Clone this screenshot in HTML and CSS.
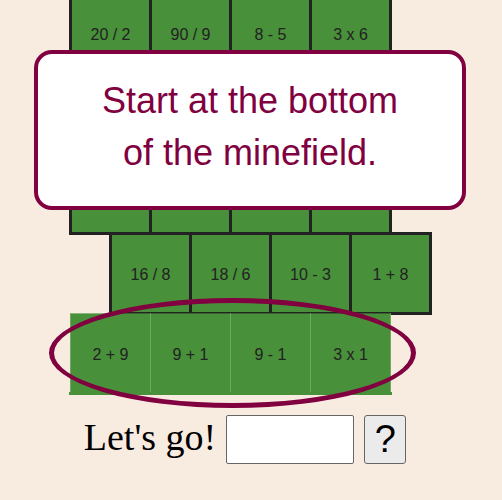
FILE: index.html
```html
<!DOCTYPE html>
<html lang="en">
<head>
<meta charset="utf-8">
<title>Minefield</title>
<link rel="stylesheet" href="styles.css">
</head>
<body>
<main class="game">
  <div class="board">
    <div class="row"><div class="cell">20 / 2</div><div class="cell">90 / 9</div><div class="cell">8 - 5</div><div class="cell">3 x 6</div></div>
    <div class="row shifted"><div class="cell"></div><div class="cell"></div><div class="cell"></div><div class="cell"></div></div>
    <div class="row"><div class="cell"></div><div class="cell"></div><div class="cell"></div><div class="cell"></div></div>
    <div class="row shifted"><div class="cell">16 / 8</div><div class="cell">18 / 6</div><div class="cell">10 - 3</div><div class="cell">1 + 8</div></div>
    <div class="row start"><div class="cell">2 + 9</div><div class="cell">9 + 1</div><div class="cell">9 - 1</div><div class="cell">3 x 1</div></div>
    <div class="ring"></div>
  </div>
  <form class="answer">
    <label for="answer">Let's go!</label>
    <input class="field" id="answer" type="text">
    <button class="help" type="button">?</button>
  </form>
  <p class="hint">Start at the bottom<br>of the minefield.</p>
</main>
</body>
</html>
```
FILE: styles.css
```css
* {
  box-sizing: border-box;
}

html {
  height: 100%;
  overflow: hidden;
}

body {
  margin: 0;
  background: #f8ebe0;
  font-family: "Liberation Sans", Arial, sans-serif;
  color: #222;
}

.game {
  position: relative;
  display: flex;
  flex-direction: column;
  align-items: center;
}

.board {
  position: relative;
  width: 364px;
  margin-top: -8px;
}

.row {
  display: flex;
  width: 323px;
  height: 83px;
  margin-bottom: -3px;
}

.shifted {
  margin-left: 40px;
}

.cell {
  flex: none;
  display: flex;
  align-items: center;
  justify-content: center;
  width: 83px;
  margin-right: -3px;
  padding-top: 2px;
  border: 3px solid #222;
  background: #48903a;
  font-size: 16px;
}

.start {
  position: relative;
  margin-top: 1px;
  margin-bottom: 0;
  height: 82px;
  padding: 0 1px;
  border-bottom: 3px solid #48903a;
}

.start .cell {
  width: 81px;
  margin-right: -1px;
  padding-top: 4px;
  border: 1px solid #70a863;
  border-top-color: rgba(72, 144, 58, 0.6);
  border-bottom: 0;
  background-clip: padding-box;
}

.ring {
  position: absolute;
  top: 306px;
  left: -20px;
  width: 367px;
  height: 110px;
  border: 5px solid #800040;
  border-radius: 50%;
}

.answer {
  display: flex;
  align-items: flex-start;
  gap: 10px;
  margin: 20px 0 0;
  padding-right: 12px;
  color: #000;
}

.answer label {
  font-family: "Liberation Serif", "Times New Roman", serif;
  font-size: 38px;
  line-height: 44px;
}

.field,
.help {
  height: 49px;
  margin: 0;
  border: 1px solid #666;
  color: #000;
  font: 38px "Liberation Sans", Arial, sans-serif;
}

.field {
  width: 128px;
  border-radius: 2px;
  background: #fff;
}

.help {
  width: 42px;
  padding: 0;
  border-radius: 3px;
  background: #ebebeb;
}

.hint {
  position: absolute;
  top: 50px;
  left: 34px;
  right: 36px;
  margin: 0;
  padding: 21px 0 27px;
  border: 4px solid #800040;
  border-radius: 18px;
  background: #fff;
  color: #800040;
  font-size: 36px;
  line-height: 52px;
  text-align: center;
}
```
